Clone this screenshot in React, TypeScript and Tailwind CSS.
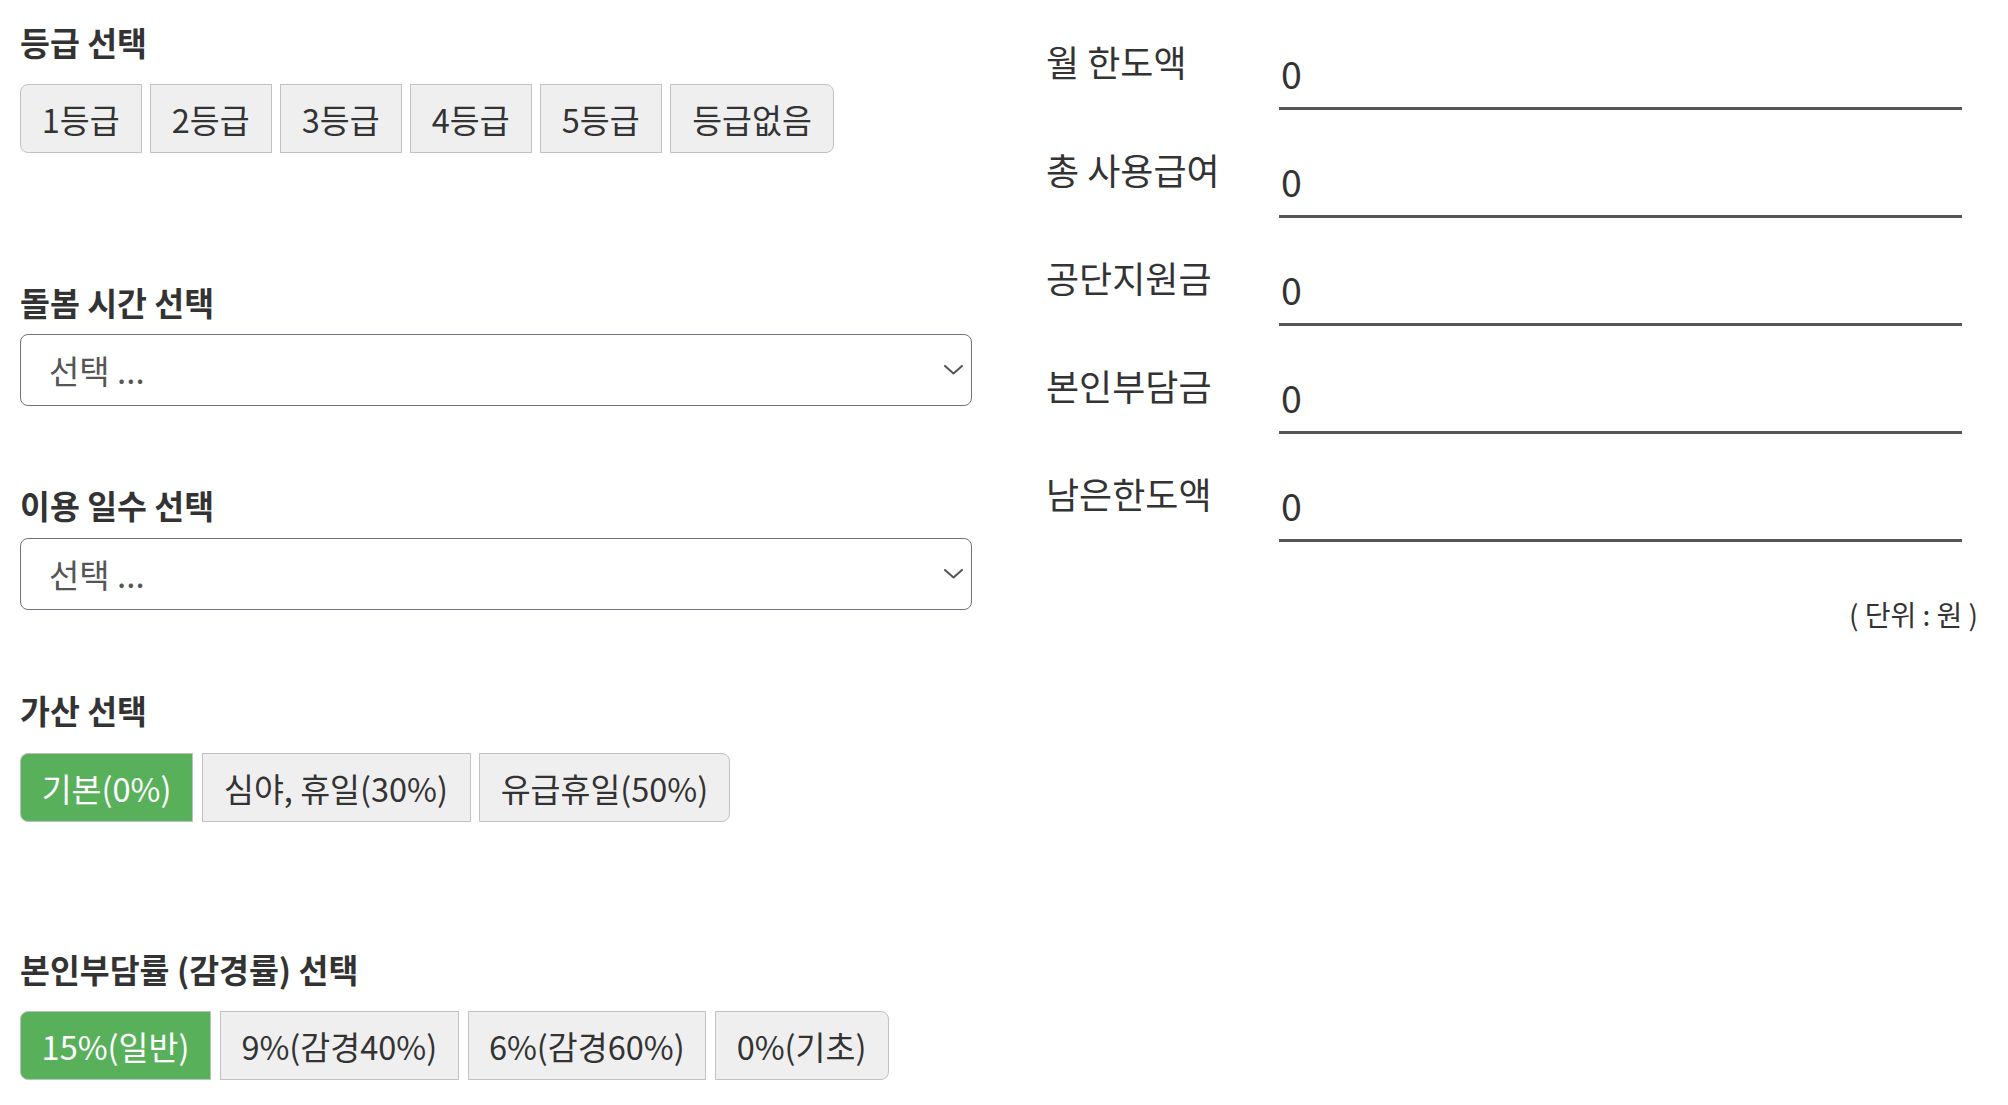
import React from "react";

type Btn = { label: string; w: string; active?: boolean };

function ButtonGroup({ items }: { items: Btn[] }) {
  return (
    <div className="flex gap-[8.5px]">
      {items.map((b, i) => {
        const first = i === 0;
        const last = i === items.length - 1;
        return (
          <div
            key={b.label}
            className={[
              "flex h-[69px] items-center justify-center border text-[32.5px] leading-[45px] whitespace-nowrap",
              b.w,
              first ? "rounded-l-[8px]" : "",
              last ? "rounded-r-[8px]" : "",
              b.active
                ? "bg-[#58b05b] border-[#b9c4b9] text-white"
                : "bg-[#efefef] border-[#c2c2c2] text-[#333]",
            ].join(" ")}
          >
            {b.label}
          </div>
        );
      })}
    </div>
  );
}

function Heading({ children, className }: { children: React.ReactNode; className?: string }) {
  return (
    <div className={"text-[32.5px] leading-[45px] font-bold text-[#333] whitespace-nowrap " + (className ?? "")}>
      {children}
    </div>
  );
}

function SelectBox({ className }: { className?: string }) {
  return (
    <div
      className={
        "flex h-[72px] w-full items-center rounded-[8px] border border-[#70767d] bg-white pl-[28px] " +
        (className ?? "")
      }
    >
      <span className="text-[33px] leading-[48px] text-[#555]">선택 ...</span>
      <svg className="ml-auto mr-[8px]" width="19" height="10" viewBox="0 0 19 10" fill="none">
        <path d="M1 1 L9.5 8.5 L18 1" stroke="#555" strokeWidth="2" strokeLinecap="round" strokeLinejoin="round" />
      </svg>
    </div>
  );
}

function ResultRow({ label }: { label: string }) {
  return (
    <div className="flex h-[108px] items-start">
      <div className="w-[233px] text-[36px] leading-[49.5px] text-[#333] whitespace-nowrap">{label}</div>
      <div className="mt-[7.5px] w-[683px] border-b-[3px] border-[#555] pb-[6.5px] pl-[2px] text-[37.5px] leading-[56.25px] text-[#333]">
        0
      </div>
    </div>
  );
}

export default function App() {
  return (
    <div className="min-h-screen bg-white font-['Noto_Sans_CJK_KR','Noto_Sans',sans-serif]">
      <div className="flex pl-[20px]">
        <div className="w-[952px] pt-[19px]">
          <Heading>등급 선택</Heading>
          <div className="mt-[20px]">
            <ButtonGroup
              items={[
                { label: "1등급", w: "w-[121.5px]" },
                { label: "2등급", w: "w-[121.5px]" },
                { label: "3등급", w: "w-[121.5px]" },
                { label: "4등급", w: "w-[121.5px]" },
                { label: "5등급", w: "w-[121.5px]" },
                { label: "등급없음", w: "w-[164px]" },
              ]}
            />
          </div>

          <Heading className="mt-[126px]">돌봄 시간 선택</Heading>
          <SelectBox className="mt-[10px]" />

          <Heading className="mt-[76px]">이용 일수 선택</Heading>
          <SelectBox className="mt-[11px]" />

          <Heading className="mt-[77px]">가산 선택</Heading>
          <div className="mt-[21px]">
            <ButtonGroup
              items={[
                { label: "기본(0%)", w: "w-[173px]", active: true },
                { label: "심야, 휴일(30%)", w: "w-[269px]" },
                { label: "유급휴일(50%)", w: "w-[251px]" },
              ]}
            />
          </div>

          <Heading className="mt-[124px]">본인부담률 (감경률) 선택</Heading>
          <div className="mt-[20px]">
            <ButtonGroup
              items={[
                { label: "15%(일반)", w: "w-[191px]", active: true },
                { label: "9%(감경40%)", w: "w-[239.5px]" },
                { label: "6%(감경60%)", w: "w-[238.5px]" },
                { label: "0%(기초)", w: "w-[174px]" },
              ]}
            />
          </div>
        </div>

        <div className="ml-[74px] w-[932px] pt-[37px]">
          <ResultRow label="월 한도액" />
          <ResultRow label="총 사용급여" />
          <ResultRow label="공단지원금" />
          <ResultRow label="본인부담금" />
          <ResultRow label="남은한도액" />
          <div className="mt-[18.5px] text-right text-[28px] leading-[36px] text-[#333] whitespace-pre">( 단위 : 원 )</div>
        </div>
      </div>
    </div>
  );
}
